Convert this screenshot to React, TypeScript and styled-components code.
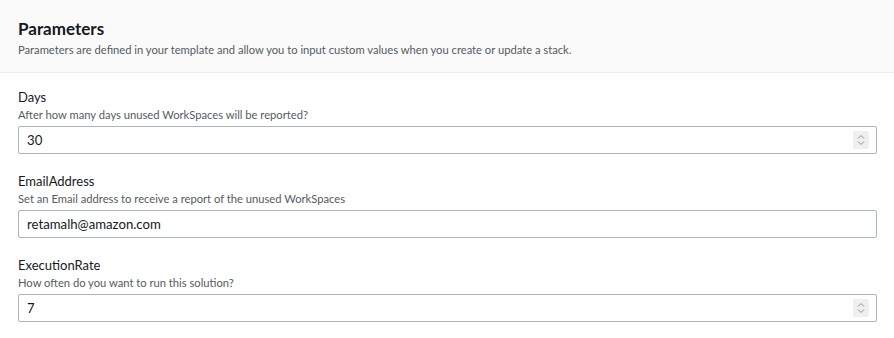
import React, { useState } from 'react'
import styled, { createGlobalStyle } from 'styled-components'

const GlobalStyle = createGlobalStyle`
  body {
    margin: 0;
    background: #fff;
    font-family: Lato, 'Open Sans', Arial, sans-serif;
    color: #16191f;
  }
`

const Panel = styled.div`
  width: 894px;
  background: #fff;
`

const Header = styled.div`
  background: #fafafa;
  border-bottom: 1px solid #eaeded;
  padding: 18px 18px 15px;
  height: 73px;
  box-sizing: border-box;
`

const Title = styled.h2`
  margin: 0;
  font-size: 17px;
  line-height: 21px;
  font-weight: 700;
  color: #16191f;
`

const HeaderDesc = styled.div`
  margin-top: 3px;
  font-size: 11.2px;
  line-height: 16px;
  color: #545b64;
`

const Body = styled.div`
  padding: 14px 18px 0 18px;
`

const Field = styled.div`
  display: flex;
  flex-direction: column;
  margin-bottom: 17px;
`

const Label = styled.label`
  font-size: 13px;
  line-height: 20px;
  color: #16191f;
`

const Hint = styled.div`
  font-size: 11.2px;
  line-height: 16px;
  color: #545b64;
  margin-bottom: 3px;
`

const InputWrap = styled.div`
  position: relative;
  width: 859px;
`

const Input = styled.input`
  box-sizing: border-box;
  width: 100%;
  height: 28px;
  border: 1px solid #aab7b8;
  border-radius: 2px;
  padding: 0 8px;
  font-family: inherit;
  font-size: 13.2px;
  color: #16191f;
  outline: none;
`

const Spinner = styled.span`
  position: absolute;
  right: 8px;
  top: 5px;
  width: 16px;
  height: 18px;
  background: #efeff0;
  border-radius: 2px;
  display: flex;
  align-items: center;
  justify-content: center;
`

const Stepper = () => (
  <Spinner>
    <svg width="8" height="12" viewBox="0 0 8 12" fill="none" stroke="#8a8d91" strokeWidth="1">
      <path d="M1 4.5 L4 1.5 L7 4.5" />
      <path d="M1 7.5 L4 10.5 L7 7.5" />
    </svg>
  </Spinner>
)

interface IParam {
  name: string
  hint: string
  value: string
  numeric?: boolean
}

const params: IParam[] = [
  { name: 'Days', hint: 'After how many days unused WorkSpaces will be reported?', value: '30', numeric: true },
  { name: 'EmailAddress', hint: 'Set an Email address to receive a report of the unused WorkSpaces', value: 'retamalh@amazon.com' },
  { name: 'ExecutionRate', hint: 'How often do you want to run this solution?', value: '7', numeric: true },
]

const App: React.FC = () => {
  const [values, setValues] = useState(params.map((p) => p.value))

  return (
    <>
      <GlobalStyle />
      <Panel>
        <Header>
          <Title>Parameters</Title>
          <HeaderDesc>
            Parameters are defined in your template and allow you to input custom values when you create or update a stack.
          </HeaderDesc>
        </Header>
        <Body>
          {params.map((p, i) => (
            <Field key={p.name}>
              <Label>{p.name}</Label>
              <Hint>{p.hint}</Hint>
              <InputWrap>
                <Input
                  value={values[i]}
                  onChange={(e) => {
                    const next = [...values]
                    next[i] = e.target.value
                    setValues(next)
                  }}
                />
                {p.numeric && <Stepper />}
              </InputWrap>
            </Field>
          ))}
        </Body>
      </Panel>
    </>
  )
}

export default App
